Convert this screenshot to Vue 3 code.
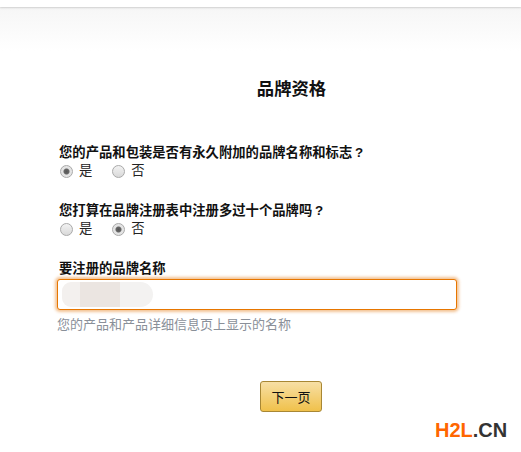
<script setup>
import { ref } from 'vue'

const questions = [
  { id: 'q1', text: '您的产品和包装是否有永久附加的品牌名称和标志\u2009?', value: ref('yes') },
  { id: 'q2', text: '您打算在品牌注册表中注册多过十个品牌吗\u2009?', value: ref('no') }
]
const options = [
  { value: 'yes', label: '是' },
  { value: 'no', label: '否' }
]
</script>

<template>
  <div class="page">
    <div class="topbar"></div>
    <div class="fade"></div>
    <main class="content">
      <h1 class="title">品牌资格</h1>
      <form class="form" @submit.prevent>
        <fieldset v-for="q in questions" :key="q.id" class="question">
          <legend class="label">{{ q.text }}</legend>
          <div class="options">
            <label v-for="o in options" :key="o.value" class="option">
              <input v-model="q.value.value" class="radio" type="radio" :name="q.id" :value="o.value" />
              <span>{{ o.label }}</span>
            </label>
          </div>
        </fieldset>
        <div class="field">
          <label class="label" for="brand">要注册的品牌名称</label>
          <div class="input-wrap">
            <input id="brand" class="input" type="text" />
            <div class="smudge"><i class="s1"></i><i class="s2"></i><i class="s3"></i></div>
          </div>
          <div class="hint">您的产品和产品详细信息页上显示的名称</div>
        </div>
        <div class="actions">
          <button class="next" type="submit">下一页</button>
        </div>
      </form>
    </main>
    <div class="mark"><b>H2L</b><em>.CN</em></div>
  </div>
</template>

<style>
html, body { margin: 0; background: #fff; }
</style>

<style scoped>
.page {
  position: relative;
  width: 521px;
  height: 452px;
  overflow: hidden;
  background: #fff;
  color: #111;
  font-family: "Liberation Sans", "Noto Sans CJK SC", sans-serif;
  font-size: 13.33px;
}
.topbar { height: 7px; background: #fff; box-shadow: 0 1px 2px rgba(0, 0, 0, .16); position: relative; }
.fade { height: 44px; background: linear-gradient(#f6f6f6, #fff); }
.content { padding: 26px 0 0 59px; }
.title {
  margin: 0 0 44px;
  width: 465px;
  text-align: center;
  font-size: 17.33px;
  line-height: 24px;
  font-weight: 700;
  color: #111;
}
.form { display: flex; flex-direction: column; }
.question { border: 0; margin: 0 0 23px; padding: 0; }
.label { display: block; padding: 0; font-size: 13.33px; line-height: 16px; font-weight: 700; color: #111; }
.options { display: flex; gap: 20px; height: 18px; margin-top: 1px; padding-left: 1px; align-items: center; }
.option { display: flex; align-items: center; gap: 6px; color: #222; line-height: 16px; }
.radio {
  appearance: none;
  -webkit-appearance: none;
  width: 13px;
  height: 13px;
  margin: 0;
  border: 1px solid #a9a9a9;
  border-radius: 50%;
  background: linear-gradient(#f2f2f2, #d9d9d9);
  box-sizing: border-box;
}
.radio:checked {
  background: radial-gradient(circle, #555 0, #666 2.5px, #e2e2e2 3.5px, #e8e8e8 100%);
}
.field { display: flex; flex-direction: column; }
.input-wrap { position: relative; width: 400px; height: 31px; margin: 2px 0 0 -2px; }
.input {
  display: block;
  width: 100%;
  height: 100%;
  box-sizing: border-box;
  border: 1px solid #e77600;
  border-radius: 3px;
  background: #fff;
  box-shadow: 0 0 3px 2px rgba(228, 121, 17, .45);
  outline: 0;
}
.smudge { position: absolute; left: 5px; top: 3px; height: 25px; display: flex; }
.smudge i { display: block; height: 100%; }
.s1 { width: 18px; background: #f3f0ee; border-radius: 9px 0 0 9px; }
.s2 { width: 40px; background: #ebe5e1; }
.s3 { width: 33px; background: #f3f2f1; border-radius: 0 16px 16px 0; }
.hint { margin: 7px 0 0 -2px; font-size: 13px; line-height: 16px; color: #8a9099; }
.actions { display: flex; margin-top: 48px; padding-left: 201px; }
.next {
  width: 62px;
  height: 31px;
  padding: 0;
  border: 1px solid #a88734;
  border-radius: 3px;
  background: linear-gradient(#f7dfa5, #f0c14b);
  color: #111;
  font-family: inherit;
  font-size: 13px;
}
.mark {
  position: absolute;
  left: 435px;
  top: 419px;
  font-family: "Liberation Sans", sans-serif;
  font-size: 20px;
  line-height: 22px;
  font-weight: 700;
  white-space: nowrap;
}
.mark b { color: #ff6600; }
.mark em { font-style: normal; color: #333; }
</style>
